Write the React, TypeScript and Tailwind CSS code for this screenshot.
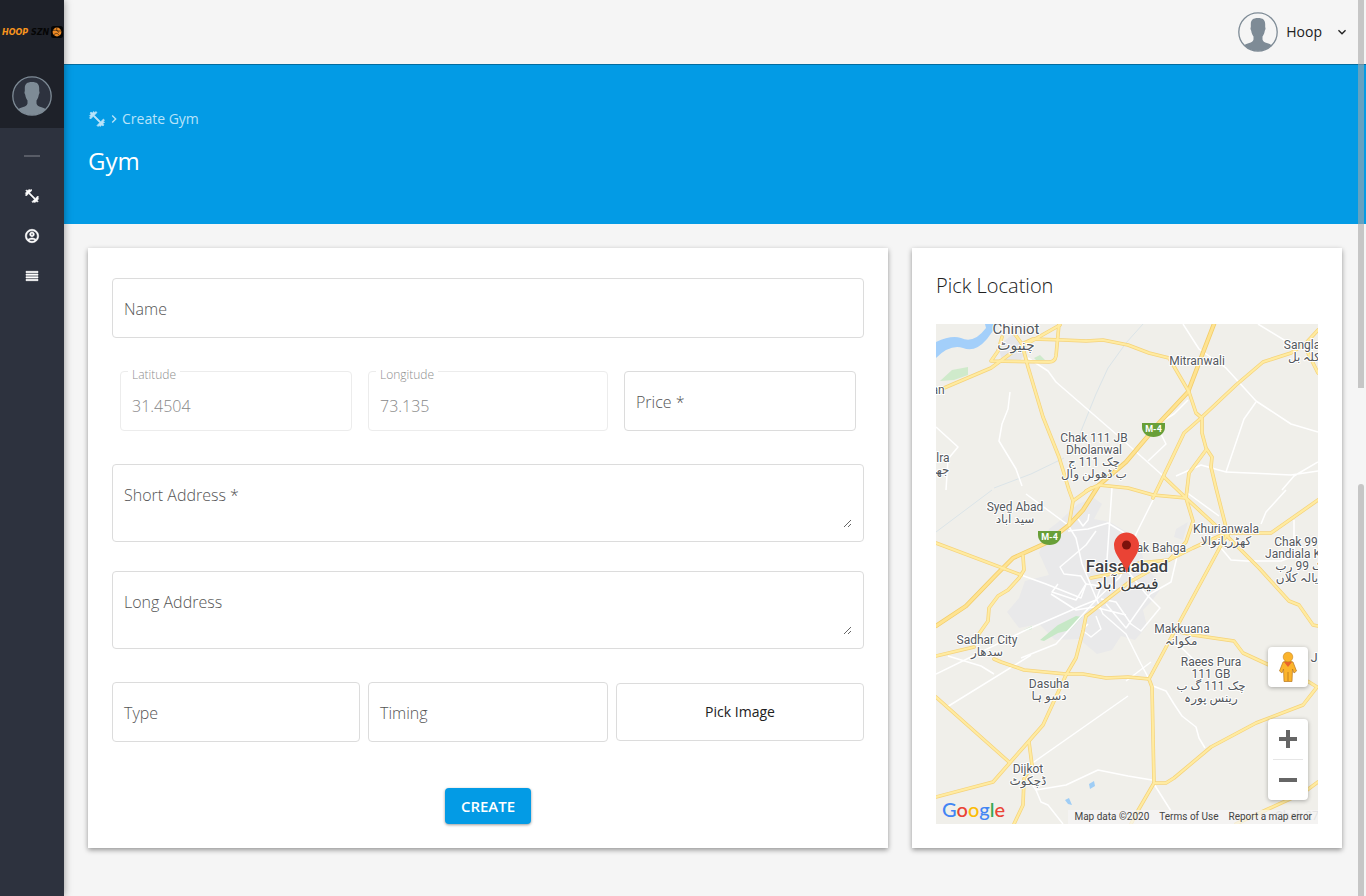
import type { ReactNode } from 'react';
import { MdChevronRight, MdKeyboardArrowDown } from 'react-icons/md';

const icons = {
  gym: 'M20.57 14.86L22 13.43 20.57 12 17 15.57 8.43 7 12 3.43 10.57 2 9.14 3.43 7.71 2 5.57 4.14 4.14 2.71 2.71 4.14l1.430 1.430L2 7.710l1.430 1.430L2 10.570 3.430 12 7 8.430 15.570 17 12 20.570 13.430 22l1.430-1.430L16.290 22l2.140-2.140 1.430 1.430 1.430-1.430-1.430-1.430L22 16.290z',
  account: 'M12 2C6.480 2 2 6.480 2 12s4.480 10 10 10 10-4.480 10-10S17.520 2 12 2zM7.350 18.500C8.660 17.560 10.260 17 12 17s3.340.56 4.650 1.500C15.340 19.440 13.740 20 12 20s-3.340-.56-4.650-1.500zM18.140 17.120C16.450 15.800 14.320 15 12 15s-4.450.8-6.140 2.120C4.700 15.730 4 13.950 4 12c0-4.420 3.580-8 8-8s8 3.580 8 8c0 1.950-.7 3.730-1.860 5.120zM12 6c-1.930 0-3.500 1.570-3.500 3.500S10.070 13 12 13s3.500-1.570 3.500-3.500S13.930 6 12 6zm0 5c-.83 0-1.500-.67-1.500-1.500S11.170 8 12 8s1.500.67 1.500 1.500S12.830 11 12 11z',
  list: 'M3 15h18v-2H3v2zm0 4h18v-2H3v2zm0-8h18V9H3v2zm0-6v2h18V5H3z',
};

function Icon({ name, size = 16 }: { name: keyof typeof icons; size?: number }) {
  return (
    <svg viewBox="0 0 24 24" width={size} height={size} fill="currentColor" stroke="currentColor" strokeWidth=".9">
      <path d={icons[name]} />
    </svg>
  );
}

function Avatar({ dark }: { dark?: boolean }) {
  return (
    <svg viewBox="0 0 40 40" className="h-10 w-10 shrink-0" role="img" aria-label="Profile">
      <clipPath id={dark ? 'avatar-dark' : 'avatar-light'}>
        <circle cx="20" cy="20" r="19" />
      </clipPath>
      <circle cx="20" cy="20" r="19.2" fill={dark ? '#2d323e' : '#f5f5f5'} stroke="#7e8b96" strokeWidth="1.3" />
      <path
        clipPath={dark ? 'url(#avatar-dark)' : 'url(#avatar-light)'}
        fill="#7e8b96"
        d="M20 6c5 0 7.200 2 7.200 6.200v3c.6.5.4 2.600-.4 3.600-.4 2.600-1.200 4.400-2.300 5.600v3c.4 1.900 2 2.700 4.300 3.500 3.200 1.100 5 1.900 7 3.400V41H4.200v-6.700c2-1.500 3.800-2.300 7-3.400 2.300-.8 3.900-1.600 4.300-3.500v-3c-1.100-1.200-1.900-3-2.300-5.600-.8-1-1-3.100-.4-3.600v-3C12.800 8 15 6 20 6z"
      />
    </svg>
  );
}

function Logo() {
  return (
    <svg viewBox="0 0 64 16" className="h-4 w-full" role="img" aria-label="Hoopszn">
      <g fontFamily="'DejaVu Sans', sans-serif" fontWeight="700" fontStyle="italic" fontSize="8">
        <text x="2" y="11" fill="#f7941d">HOOP</text>
        <text x="31" y="11" fill="#050505">SZN</text>
      </g>
      <rect x="51" y="2" width="12" height="12" rx="2.500" fill="#050505" />
      <circle cx="57" cy="8" r="4.400" fill="#ee8a25" />
      <path d="M53 6.500c3-1 5 1 8 .5M54 10.500c3-2 4-1 5 1M57 3.500c-1 2 0 4 2 5" fill="none" stroke="#1a1208" strokeWidth=".6" />
    </svg>
  );
}

function Sidebar() {
  return (
    <aside className="z-20 flex w-16 shrink-0 flex-col bg-[#2d323e] text-white shadow-[0_0_8px_rgba(0,0,0,0.4)]">
      <div className="bg-[#1e2129]">
        <div className="flex h-16 items-center">
          <Logo />
        </div>
        <div className="flex h-16 items-center justify-center">
          <Avatar dark />
        </div>
      </div>
      <nav className="flex flex-col items-center pt-2">
        <div className="flex h-10 items-center">
          <span className="h-[2px] w-4 bg-[#585c66]" />
        </div>
        <a href="#gym" aria-label="Gym" className="flex h-10 items-center">
          <Icon name="gym" />
        </a>
        <a href="#users" aria-label="Users" className="flex h-10 items-center">
          <Icon name="account" />
        </a>
        <a href="#list" aria-label="List" className="flex h-10 items-center">
          <Icon name="list" />
        </a>
      </nav>
    </aside>
  );
}

function Field({ label, name, type = 'text' }: { label: string; name: string; type?: string }) {
  return (
    <label className="relative block h-[60px] rounded border border-[#dcdcdc]">
      <span className="absolute left-[11px] top-[18px] leading-6 text-[#555]">{label}</span>
      <input name={name} type={type} className="h-full w-full bg-transparent px-[11px] pt-2 outline-none" />
    </label>
  );
}

function LockedField({ label, name, value }: { label: string; name: string; value: string }) {
  return (
    <label className="relative block h-[60px] rounded border border-[#ececec]">
      <span className="absolute -top-[3px] left-[7px] bg-white px-1 text-xs leading-3 text-[#8e8e8e]">{label}</span>
      <input name={name} value={value} disabled className="h-full w-full bg-transparent px-[11px] pt-2.5 text-[#888]" />
    </label>
  );
}

function AreaField({ label, name }: { label: string; name: string }) {
  return (
    <label className="relative block h-[78px] rounded border border-[#dcdcdc] px-[11px] pt-5 pb-[13px]">
      <span className="absolute left-[11px] top-[18px] leading-6 text-[#555]">{label}</span>
      <textarea name={name} className="block h-full w-full resize bg-transparent outline-none" />
    </label>
  );
}

const yellowRoads = [
  'M8 64L55 44L78 27L124 1',
  'M123 0L120 32Q119 38 113 38L55 37L62 27L66 13',
  'M78 9L86 20L97 15L127 16L150 17L167 16L192 21L213 29L233 34L253 68L260 89L266 94L266 109L270 124L276 133L275 143L280 164L292 211',
  'M86 20L92 43L107 93L123 133L133 166L137 177L133 201',
  'M137 177L155 164',
  'M382 6L370 19L355 29L327 38L300 61L265 94L248 109L228 151L217 174',
  'M372 29L382 49',
  'M270 126L253 149L250 174L257 197L250 218L233 236L203 239L190 245',
  'M228 153L250 174L290 211L323 244L353 277L363 281L377 301L382 302',
  'M150 167L163 161L192 164L217 171L250 174',
  'M382 176L335 209L290 209L257 224L233 236L192 259L150 292L147 307L140 334L130 351L107 401L57 458L0 473',
  'M290 212L243 299L213 355L216 363L218 459L200 490L195 500',
  'M0 219L85 251',
  'M87 232L88 246L83 254L72 266L62 272L53 284L52 297L40 314',
  'M0 332L38 323M58 335L65 338L88 346L130 350L147 350L170 354L192 353L213 355',
  'M0 373L73 438',
  'M93 418L96 441L88 455L87 481L78 500',
  'M218 459L230 459L238 454L275 423L320 399L367 381L381 363L373 358L333 341L307 329L298 317L257 311L235 306',
  'M382 458L367 469L330 486L300 500',
  'M155 254L190 247',
];

const motorway = 'M278 0L268 26L252 68L223 99L190 138L163 161L147 186L133 201L110 219L77 234L60 251L30 282L0 302';

const whiteRoads = [
  'M92 34L112 47L120 58L150 84L180 110L225 150L243 166',
  'M74 68L72 85L66 100L63 117L80 145L86 162',
  'M0 103L22 123L12 135L10 166',
  'M247 0L263 25L290 44L320 77L355 100L382 108',
  'M320 78L308 95L290 148L265 141L240 152',
  'M290 148L355 151L382 147M346 166L358 152L382 138',
  'M322 0L358 22',
  'M225 110L230 120L212 137M252 76L238 90L225 98',
  'M85 251L110 260L145 274L150 260L165 262',
  'M176 164L170 250L160 276L120 320L85 334',
  'M220 170L200 210L190 240L184 253L160 276L145 282L90 306L0 350',
  'M90 170L132 201L140 214L146 240L160 274L167 290L190 310L205 340L213 355',
  'M132 207L152 205L172 199L190 210L200 225L190 245L210 270L224 284L205 307L195 300L180 278L165 275',
  'M160 207L150 221L124 243L128 250L145 252L150 260L140 276L116 268L122 260',
  'M115 270L140 286L158 283L190 291M160 292L165 305L155 313L146 306L152 300M170 280L190 304L214 270L235 258L244 220',
  'M275 212L295 236L310 237L345 237L358 232L358 196',
  'M250 168L283 192M325 200L330 188L350 166',
  'M11 383L95 331M12 332L45 342L58 350',
  'M95 440L192 372M92 455L100 466L130 461L162 446L192 452L216 456',
  'M100 466L105 478L112 481L127 500M218 460L235 487',
  'M217 362L230 367L238 380L246 392L260 403L263 414L269 424',
  'M190 357L215 338M240 318L260 338',
  'M142 195L147 202L152 196L153 190',
];

// x, y, size, text
const places: [number, number, number, string][] = [
  [80, 10, 15, 'Chiniot'],
  [80, 26, 14, 'چنیوٹ'],
  [261, 41, 12, 'Mitranwali'],
  [366, 25, 12, 'Sangla'],
  [368, 37, 12, 'کلہ بل'],
  [158, 118, 12, 'Chak 111 JB'],
  [158, 130, 12, 'Dholanwal'],
  [158, 142, 12, 'چک 111 ج'],
  [158, 154, 12, 'ب ڈھولن وال'],
  [7, 138, 12, 'lra'],
  [6, 150, 12, 'جھ'],
  [2, 70, 12, 'an'],
  [79, 187, 12, 'Syed Abad'],
  [79, 199, 12, 'سید آباد'],
  [290, 209, 12, 'Khurianwala'],
  [290, 221, 12, 'کھڑریانوالا'],
  [218, 228, 12, 'Chak Bahga'],
  [360, 222, 12, 'Chak 99'],
  [357, 234, 12, 'Jandiala K'],
  [363, 246, 12, 'ک 99 رب'],
  [361, 258, 12, 'یالہ کلاں'],
  [246, 309, 12, 'Makkuana'],
  [245, 321, 12, 'مکوانہ'],
  [51, 320, 12, 'Sadhar City'],
  [51, 332, 12, 'سدھار'],
  [275, 342, 12, 'Raees Pura'],
  [275, 354, 12, '111 GB'],
  [275, 366, 12, 'چک 111 گ ب'],
  [275, 378, 12, 'رینس پورہ'],
  [113, 364, 12, 'Dasuha'],
  [113, 376, 12, 'دسو ہا'],
  [92, 449, 12, 'Dijkot'],
  [92, 461, 12, 'ڈچکوٹ'],
  [378, 338, 13, 'J'],
];

function Shield({ x, y }: { x: number; y: number }) {
  return (
    <g transform={`translate(${x} ${y})`}>
      <path d="M0 0h23v4c0 6-5 10-11.500 10S0 10 0 4z" fill="#689f38" />
      <text x="11.500" y="9" textAnchor="middle" fontSize="9" fontWeight="700" fill="#fff">M-4</text>
    </g>
  );
}

function MapDrawing() {
  return (
    <svg viewBox="0 0 382 500" preserveAspectRatio="xMidYMid slice" className="block h-full w-full" fontFamily="Roboto, 'DejaVu Sans', sans-serif">
      <rect width="382" height="500" fill="#f0efea" />
      <path d="M0 18Q15 11 25 14Q38 20 50 4L49 0H62L51 15Q39 29 27 24Q14 20 0 34z" fill="#a3cffa" />
      <path d="M4 57L16 46L32 43V51L18 56z" fill="#cfeacb" />
      <path d="M98 34l6-3 5 5-8 1z" fill="#cfeacb" />
      <path d="M62 22l15-12 15 12-7 14H66z" fill="#e6e6e8" />
      <path d="M142 180l16-6 8 6-8 15 16 3 20 12 12 20 4 14 10 10 4 12-9 12-8 8 4 16-12 14-14-4-9 14-15 4-18-15-24 1-16-16-20 4-12-16 12-14 6-17 24-6-10-22 10-24 8-6z" fill="#e9e9ea" />
      <path d="M240 205l12-7-5 18-9-3z" fill="#e9e9ea" />
      <path d="M104 316l18-15 18-9 6 1-12 13-12 3-14 8z" fill="#c6e8c6" />
      <path d="M88 306l8-4v3l-8 2z" fill="#c6e8c6" />
      <g fill="none" stroke="#dbe4e8" strokeWidth="1">
        <path d="M207 0L190 19L172 44L160 70L143 112M128 134L95 150L58 164M56 166L0 208" />
      </g>
      <path d="M153 460l5-3 1 5-5 3zM129 476l4-2 3 7-4-1z" fill="#9fcdf5" />

      <g fill="none" stroke="#fff" strokeWidth="1.500" strokeLinejoin="round">
        {whiteRoads.map((d) => <path key={d} d={d} />)}
      </g>
      <g fill="none" strokeLinejoin="round" strokeLinecap="round">
        <path d={motorway} stroke="#f3cd6a" strokeWidth="4.500" />
        {yellowRoads.map((d) => <path key={d} d={d} stroke="#f5d37b" strokeWidth="3.600" />)}
        <path d={motorway} stroke="#fee391" strokeWidth="2.800" />
        {yellowRoads.map((d) => <path key={d} d={d} stroke="#ffeba1" strokeWidth="2.200" />)}
      </g>

      <Shield x={206} y={99} />
      <Shield x={102} y={207} />

      <g textAnchor="middle" fill="#54585d" stroke="#fff" strokeWidth="2" strokeLinejoin="round" paintOrder="stroke">
        {places.map(([x, y, size, text]) => (
          <text key={text} x={x} y={y} fontSize={size}>{text}</text>
        ))}
        <text x="191" y="248" fontSize="17" fontWeight="500" fill="#3c4043">Faisalabad</text>
        <text x="191" y="265" fontSize="16" fill="#3c4043">فیصل آباد</text>
      </g>

      <path d="M190.500 249C188 238 178 232 178 221a12.500 12.500 0 0 1 25 0c0 11-10 17-12.500 28z" fill="#ea4335" />
      <circle cx="190.500" cy="221" r="4.500" fill="#7d120c" />
      <text x="361" y="496" textAnchor="middle" fontSize="12" fill="#b9babb">Chak 27</text>
    </svg>
  );
}

function MapButton({ label, children }: { label: string; children: ReactNode }) {
  return (
    <button type="button" aria-label={label} className="flex h-10 w-10 items-center justify-center">
      {children}
    </button>
  );
}

function GoogleMark() {
  return (
    <a href="#google" aria-label="Google" className="font-['Lato'] text-xl leading-6 font-medium">
      <span className="text-[#4285f4]">G</span>
      <span className="text-[#ea4335]">o</span>
      <span className="text-[#fbbc05]">o</span>
      <span className="text-[#4285f4]">g</span>
      <span className="text-[#34a853]">l</span>
      <span className="text-[#ea4335]">e</span>
    </a>
  );
}

function LocationMap() {
  return (
    <div className="relative h-[500px] overflow-hidden">
      <MapDrawing />
      <div className="absolute right-[10px] bottom-6 flex flex-col gap-8">
        <div className="rounded-sm bg-white shadow-[0_1px_4px_rgba(0,0,0,0.3)]">
          <MapButton label="Street View">
            <svg viewBox="0 0 20 32" className="h-8 w-5">
              <path d="M5 11Q10 8.500 15 11L18.500 20L16 22L14.500 18L14 30.500H6L5.500 18L4 22L1.500 20z" fill="#fbb42c" stroke="#b8761c" strokeWidth=".7" />
              <path d="M6 11h8l-4 5z" fill="#e8642c" />
              <path d="M10 21v9" stroke="#b8761c" strokeWidth=".8" />
              <circle cx="10" cy="6" r="4.800" fill="#fbb42c" stroke="#c88420" strokeWidth=".6" />
            </svg>
          </MapButton>
        </div>
        <div className="rounded-sm bg-white shadow-[0_1px_4px_rgba(0,0,0,0.3)]">
          <MapButton label="Zoom in">
            <svg viewBox="0 0 18 18" className="h-[18px] w-[18px]" fill="#666">
              <path d="M7 0h4v7h7v4h-7v7H7v-7H0V7h7z" />
            </svg>
          </MapButton>
          <div className="mx-[5px] h-px bg-[#e6e6e6]" />
          <MapButton label="Zoom out">
            <svg viewBox="0 0 18 18" className="h-[18px] w-[18px]" fill="#666">
              <path d="M0 7h18v4H0z" />
            </svg>
          </MapButton>
        </div>
      </div>
      <div className="absolute bottom-[1px] left-[6px]">
        <GoogleMark />
      </div>
      <div className="absolute right-0 bottom-0 flex gap-[10px] bg-[#f5f5f5]/70 px-[6px] font-['Roboto'] text-[10px] leading-[14px] text-[#444]">
        <span>Map data ©2020</span>
        <a href="#terms">Terms of Use</a>
        <a href="#report">Report a map error</a>
      </div>
    </div>
  );
}

function GymForm() {
  return (
    <form className="flex flex-col bg-white px-6 pt-[30px] pb-6 font-light shadow-[0_2px_5px_rgba(0,0,0,0.4)]">
      <Field label="Name" name="name" />
      <div className="mt-[33px] grid grid-cols-[29fr_30fr_29fr] gap-4 px-2">
        <LockedField label="Latitude" name="latitude" value="31.4504" />
        <LockedField label="Longitude" name="longitude" value="73.135" />
        <Field label="Price *" name="price" />
      </div>
      <div className="mt-[33px] flex flex-col gap-[29px]">
        <AreaField label="Short Address *" name="shortAddress" />
        <AreaField label="Long Address" name="longAddress" />
      </div>
      <div className="mt-[33px] grid grid-cols-[31fr_30fr_31fr] items-center gap-2">
        <Field label="Type" name="type" />
        <Field label="Timing" name="timing" />
        <button type="button" className="h-[58px] rounded border border-[#dcdcdc] text-sm font-normal text-[#212121]">
          Pick Image
        </button>
      </div>
      <button
        type="button"
        className="mt-[46px] h-9 self-center rounded bg-[#039be5] px-4 text-[15px] font-semibold text-white shadow-[0_1px_3px_rgba(0,0,0,0.4)]"
      >
        CREATE
      </button>
    </form>
  );
}

export default function App() {
  return (
    <div className="flex min-h-screen bg-[#f5f5f5] font-['Open_Sans',sans-serif] text-base text-[#212121]">
      <Sidebar />
      <div className="min-w-0 flex-1">
        <header className="flex h-16 items-center justify-end pr-4">
          <button type="button" className="flex items-center gap-2 text-sm">
            <Avatar />
            <span>Hoop</span>
            <MdKeyboardArrowDown size={16} className="ml-1" />
          </button>
        </header>
        <div className="flex h-40 flex-col border-t border-[#046c9f] bg-[#039be5] px-6 pt-11 text-white">
          <div className="flex items-center text-sm leading-5 text-[#b9e3f9]">
            <Icon name="gym" size={18} />
            <MdChevronRight size={16} />
            <a href="#create">Create Gym</a>
          </div>
          <h1 className="mt-4 text-2xl leading-8">Gym</h1>
        </div>
        <main className="grid grid-cols-[80fr_43fr] gap-6 p-6">
          <GymForm />
          <section className="bg-white p-6 shadow-[0_2px_5px_rgba(0,0,0,0.4)]">
            <h2 className="mb-6 text-xl leading-7 font-light">Pick Location</h2>
            <LocationMap />
          </section>
        </main>
      </div>

      {/* overlay scroll thumbs, page and panel */}
      <div className="pointer-events-none fixed inset-y-0 right-[2px] z-30 flex w-[6px] flex-col justify-between">
        <span className="h-[388px] bg-[#a6a6a6]/60" />
        <span className="h-[46%] rounded-t-full bg-[#a6a6a6]/60" />
      </div>
    </div>
  );
}
